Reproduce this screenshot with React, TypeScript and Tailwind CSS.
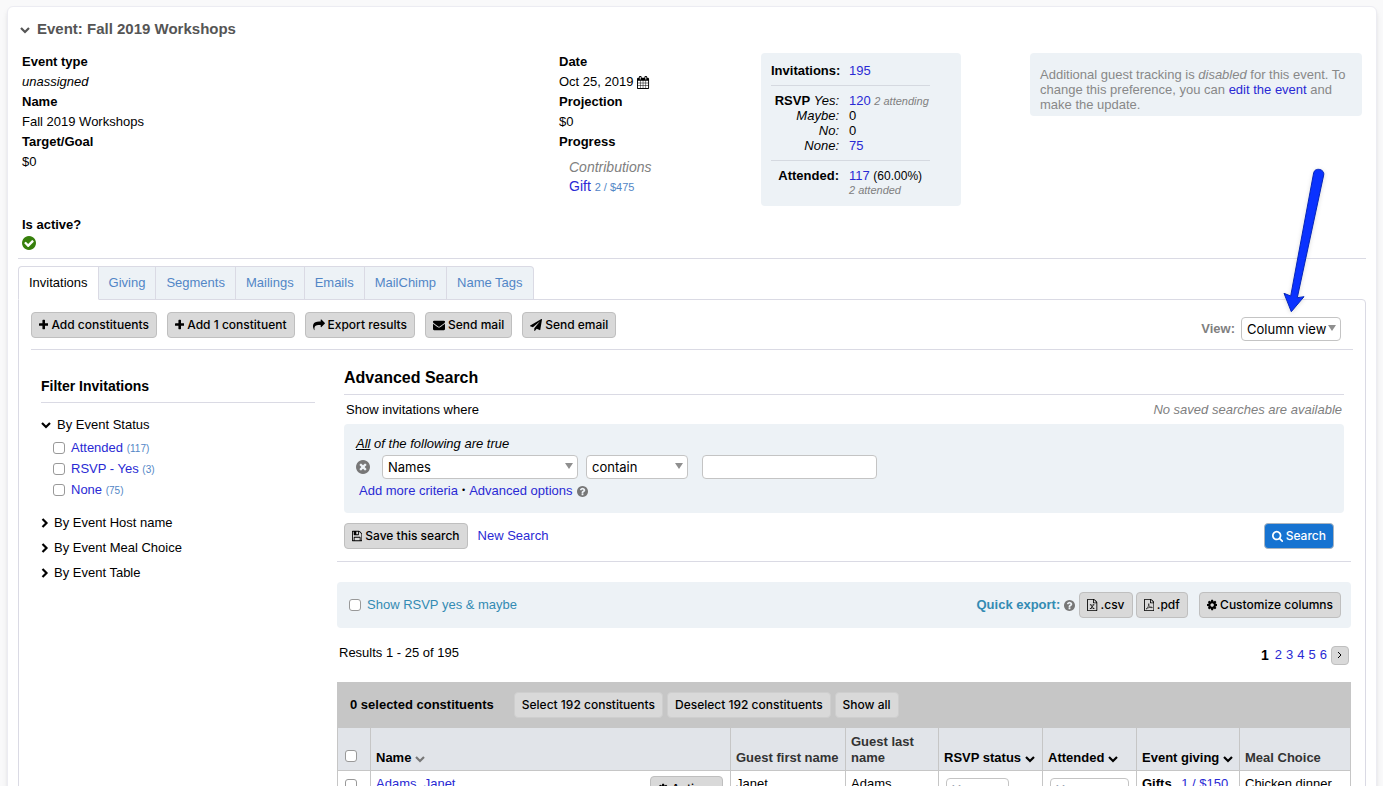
import React from 'react'

const circle = 'M1664 896q0 209-103 385.5t-279.5 279.5-385.5 103-385.5-103-279.5-279.5-103-385.5 103-385.5 279.5-279.5 385.5-103 385.5 103 279.5 279.5 103 385.5z'

// each icon has its own box, so that narrow glyphs take less room in a line
const icons = {
  plus: { box: '192 0 1408 1792', d: 'M1600 736v192q0 40-28 68t-68 28h-416v416q0 40-28 68t-68 28h-192q-40 0-68-28t-28-68v-416h-416q-40 0-68-28t-28-68v-192q0-40 28-68t68-28h416v-416q0-40 28-68t68-28h192q40 0 68 28t28 68v416h416q40 0 68 28t28 68z' },
  share: { box: '0 0 1792 1792', d: 'M1792 640q0 26-19 45l-512 512q-19 19-45 19t-45-19-19-45v-256h-224q-98 0-175.5 6t-154 21.5-133 42.5-105.5 69.5-80 101-48.5 138.5-17.5 181q0 55 5 123 0 6 2.5 23.5t2.5 26.5q0 15-8.5 25t-23.5 10q-16 0-28-17-7-9-13-22t-13.5-30-10.5-24q-127-285-127-451 0-199 53-333 162-403 875-403h224v-256q0-26 19-45t45-19 45 19l512 512q19 19 19 45z' },
  envelope: { box: '0 0 1792 1792', d: 'M1792 710v794q0 66-47 113t-113 47h-1472q-66 0-113-47t-47-113v-794q44 49 101 87 362 246 497 345 57 42 92.5 65.5t94.5 48 110 24.5h2q51 0 110-24.5t94.5-48 92.5-65.5q170-123 498-345 57-39 100-87zm0-294q0 79-49 151t-122 123q-376 261-468 325-10 7-42.5 31t-54 38.5-52 32.5-57.5 27-50 9h-2q-23 0-50-9t-57.5-27-52-32.5-54-38.5-42.5-31q-91-64-262-182.5t-205-142.5q-62-42-117-115.5t-55-136.5q0-78 41.5-130t118.5-52h1472q65 0 112.5 47t47.5 113z' },
  plane: { box: '0 0 1792 1792', d: 'M1764 11q33 24 27 64l-256 1536q-5 29-32 45-14 8-31 8-11 0-24-5l-453-185-242 295q-18 23-49 23-13 0-22-4-19-7-30.5-23.5t-11.5-36.5v-349l864-1059-1069 925-395-162q-37-14-40-55-2-40 32-59l1664-960q15-9 32-9 20 0 36 11z' },
  save: { box: '128 0 1536 1792', d: 'M512 1536h768v-384h-768v384zm896 0h128v-896q0-14-10-38.5t-20-34.5l-281-281q-10-10-34-20t-39-10v416q0 40-28 68t-68 28h-576q-40 0-68-28t-28-68v-416h-128v1280h128v-416q0-40 28-68t68-28h832q40 0 68 28t28 68v416zm-384-928v-320q0-13-9.5-22.5t-22.5-9.5h-192q-13 0-22.5 9.5t-9.5 22.5v320q0 13 9.5 22.5t22.5 9.5h192q13 0 22.5-9.5t9.5-22.5zm640 32v928q0 40-28 68t-68 28h-1344q-40 0-68-28t-28-68v-1344q0-40 28-68t68-28h928q40 0 88 20t76 48l280 280q28 28 48 76t20 88z' },
  search: { box: '64 0 1664 1792', d: 'M1216 832q0-185-131.5-316.5t-316.5-131.5-316.5 131.5-131.5 316.5 131.5 316.5 316.5 131.5 316.5-131.5 131.5-316.5zm512 832q0 52-38 90t-90 38q-54 0-90-38l-343-342q-179 124-399 124-143 0-273.5-55.5t-225-150-150-225-55.5-273.5 55.5-273.5 150-225 225-150 273.5-55.5 273.5 55.5 225 150 150 225 55.5 273.5q0 220-124 399l343 343q37 37 37 90z' },
  cog: { box: '128 0 1536 1792', d: 'M1152 896q0-106-75-181t-181-75-181 75-75 181 75 181 181 75 181-75 75-181zm512-109v222q0 12-8 23t-20 13l-185 28q-19 54-39 91 35 50 107 138 10 12 10 25t-9 23q-27 37-99 108t-94 71q-12 0-26-9l-138-108q-44 23-91 38-16 136-29 186-7 28-36 28h-222q-14 0-24.5-8.5t-11.5-21.5l-28-184q-49-16-90-37l-141 107q-10 9-25 9-14 0-25-11-126-114-165-168-7-10-7-23 0-12 8-23 15-21 51-66.5t54-70.5q-27-50-41-99l-183-27q-13-2-21-12.5t-8-23.5v-222q0-12 8-23t19-13l186-28q14-46 39-92-40-57-107-138-10-12-10-24 0-10 9-23 26-36 98.5-107.5t94.5-71.5q13 0 26 10l138 107q44-23 91-38 16-136 29-186 7-28 36-28h222q14 0 24.5 8.5t11.5 21.5l28 184q49 16 90 37l142-107q9-9 24-9 13 0 25 10 129 119 165 170 7 8 7 22 0 12-8 23-15 21-51 66.5t-54 70.5q26 50 41 98l183 28q13 2 21 12.5t8 23.5z' },
  calendar: { box: '64 0 1664 1792', d: 'M192 1664h288v-288h-288v288zm352 0h320v-288h-320v288zm-352-352h288v-320h-288v320zm352 0h320v-320h-320v320zm-352-384h288v-288h-288v288zm736 736h320v-288h-320v288zm-384-736h320v-288h-320v288zm768 736h288v-288h-288v288zm-384-352h320v-320h-320v320zm-352-864v-288q0-13-9.5-22.5t-22.5-9.5h-64q-13 0-22.5 9.5t-9.5 22.5v288q0 13 9.5 22.5t22.5 9.5h64q13 0 22.5-9.5t9.5-22.5zm736 864h288v-320h-288v320zm-384-384h320v-288h-320v288zm384 0h288v-288h-288v288zm32-480v-288q0-13-9.5-22.5t-22.5-9.5h-64q-13 0-22.5 9.5t-9.5 22.5v288q0 13 9.5 22.5t22.5 9.5h64q13 0 22.5-9.5t9.5-22.5zm384-64v1280q0 52-38 90t-90 38h-1408q-52 0-90-38t-38-90v-1280q0-52 38-90t90-38h128v-96q0-66 47-113t113-47h64q66 0 113 47t47 113v96h384v-96q0-66 47-113t113-47h64q66 0 113 47t47 113v96h128q52 0 90 38t38 90z' },
  check: { box: '128 128 1536 1536', d: 'M1412 734q0-28-18-46l-91-90q-19-19-45-19t-45 19l-408 407-226-226q-19-19-45-19t-45 19l-91 90q-18 18-18 46 0 27 18 45l362 362q19 19 45 19 27 0 46-19l543-543q18-18 18-45z' + circle },
  times: { box: '128 128 1536 1536', d: 'M1277 1122q0-26-19-45l-181-181 181-181q19-19 19-45 0-27-19-46l-90-90q-19-19-46-19-26 0-45 19l-181 181-181-181q-19-19-45-19-27 0-46 19l-90 90q-19 19-19 46 0 26 19 45l181 181-181 181q-19 19-19 45 0 27 19 46l90 90q19 19 46 19 26 0 45-19l181-181 181 181q19 19 45 19 27 0 46-19l90-90q19-19 19-46z' + circle },
  question: { box: '128 128 1536 1536', d: 'M1024 1376v-192q0-14-9-23t-23-9h-192q-14 0-23 9t-9 23v192q0 14 9 23t23 9h192q14 0 23-9t9-23zm256-672q0-88-55.5-163t-138.5-116-170-41q-243 0-371 213-15 24 8 42l132 100q7 6 19 6 16 0 25-12 53-68 86-92 34-24 86-24 48 0 85.5 26t37.5 59q0 38-20 61t-68 45q-63 28-115.5 86.5t-52.5 125.5v36q0 14 9 23t23 9h192q14 0 23-9t9-23q0-19 21.5-49.5t54.5-49.5q32-18 49-28.5t46-35 44.5-48 28-60.5 12.5-81z' + circle },
  file: { box: '128 0 1536 1792', d: 'M1596 380q28 28 48 76t20 88v1152q0 40-28 68t-68 28h-1344q-40 0-68-28t-28-68v-1600q0-40 28-68t68-28h896q40 0 88 20t76 48zm-444-244v376h376q-10-29-22-41l-313-313q-12-12-41-22zm384 1528v-1024h-416q-40 0-68-28t-28-68v-416h-768v1536h1280z' },
}

const tabs = ['Giving', 'Segments', 'Mailings', 'Emails', 'MailChimp', 'Name Tags']

const actions: { icon: keyof typeof icons; label: string }[] = [
  { icon: 'plus', label: 'Add constituents' },
  { icon: 'plus', label: 'Add 1 constituent' },
  { icon: 'share', label: 'Export results' },
  { icon: 'envelope', label: 'Send mail' },
  { icon: 'plane', label: 'Send email' },
]

const statuses = [
  { label: 'Attended', count: 117 },
  { label: 'RSVP - Yes', count: 3 },
  { label: 'None', count: 75 },
]

const link = 'text-[#2a2ad4] hover:underline'
const th = 'border border-[#c6c6c6] px-[5px] pb-1 align-bottom font-bold'
const td = 'border border-[#c6c6c6] px-[5px] align-top'

const buttonColors = {
  gray: 'border-[#bfbfbf] bg-[#d9d9d9] text-black',
  flat: 'border-[#cecece] bg-[#d9d9d9] text-black',
  blue: 'border-[#a9b4bf] bg-[#1673d1] text-white',
}

const Icon = ({ name, className = 'h-3', children }: { name: keyof typeof icons; className?: string; children?: React.ReactNode }) => (
  <svg viewBox={icons[name].box} fill="currentColor" fillRule="evenodd" aria-hidden="true" className={`w-auto shrink-0 ${className}`}>
    <path d={icons[name].d} />
    {children}
  </svg>
)

const Chevron = ({ className = '' }: { className?: string }) => (
  <svg viewBox="0 0 10 10" fill="none" stroke="currentColor" strokeWidth="2.2" aria-hidden="true" className={`inline-block size-[10px] shrink-0 ${className}`}>
    <path d="M1 3l4 4 4-4" />
  </svg>
)

const ChevronRight = () => (
  <svg viewBox="0 0 8 10" fill="none" stroke="currentColor" strokeWidth="2.2" aria-hidden="true" className="h-[10px] w-2 shrink-0">
    <path d="M1.5 1l4 4-4 4" />
  </svg>
)

const Button = ({ children, color = 'gray', className = '' }: { children: React.ReactNode; color?: keyof typeof buttonColors; className?: string }) => (
  <button type="button" className={`inline-flex h-[26px] shrink-0 items-center gap-[3px] rounded border px-[7px] font-[Inter] text-xs font-medium whitespace-nowrap ${buttonColors[color]} ${className}`}>
    {children}
  </button>
)

const Select = ({ id, label, options, className = '' }: { id: string; label: string; options: string[]; className?: string }) => (
  <span className={`relative block ${className}`}>
    <select id={id} aria-label={label} className="block h-6 w-full appearance-none rounded border border-[#c4c4c4] bg-white pt-px pl-[5px] font-[Inter] text-[13px]">
      {options.map((o) => <option key={o}>{o}</option>)}
    </select>
    <svg viewBox="0 0 8 6" aria-hidden="true" className="pointer-events-none absolute top-2 right-[5px] h-[6px] w-2 fill-[#8f8f8f]">
      <path d="M0 0h8L4 6z" />
    </svg>
  </span>
)

const Checkbox = ({ id, label, className = '' }: { id: string; label?: string; className?: string }) => (
  <input id={id} type="checkbox" aria-label={label} className={`size-3 shrink-0 appearance-none rounded-[3px] border border-[#999] bg-white checked:bg-[#1673d1] ${className}`} />
)

const Arrow = () => (
  <svg viewBox="0 0 52 152" aria-hidden="true" className="pointer-events-none absolute right-3 bottom-full h-[152px] w-[52px] drop-shadow-sm">
    <path d="M36.7 7.7C38 2 48 4 46.7 10L20.3 132.7 27 131.7 14.3 146.7 7 128.3 13.7 131z" fill="#0a32ff" stroke="#0626b8" strokeWidth="1" strokeLinejoin="round" />
  </svg>
)

const Summary = () => (
  <div className="grid grid-cols-[537fr_202fr_269fr_332fr] px-1 leading-5">
    <dl>
      <dt className="font-bold">Event type</dt>
      <dd className="italic">unassigned</dd>
      <dt className="font-bold">Name</dt>
      <dd>Fall 2019 Workshops</dd>
      <dt className="font-bold">Target/Goal</dt>
      <dd>$0</dd>
      <dt className="mt-[43px] font-bold">Is active?</dt>
      <dd className="flex h-5 items-start pt-px">
        <Icon name="check" className="h-[14px] text-[#37800c]" />
      </dd>
    </dl>
    <dl>
      <dt className="font-bold">Date</dt>
      <dd className="flex items-center gap-1">Oct 25, 2019 <Icon name="calendar" className="h-[13px]" /></dd>
      <dt className="font-bold">Projection</dt>
      <dd>$0</dd>
      <dt className="font-bold">Progress</dt>
      <dd className="mt-[6px] pl-[10px] text-sm leading-[19px]">
        <p className="text-[#808080] italic">Contributions</p>
        <p><a href="#" className={link}>Gift</a> <span className="text-[11px] text-[#5286c6]">2 / $475</span></p>
      </dd>
    </dl>
    <div className="mt-px w-[200px] self-start rounded bg-[#edf2f6] pt-[10px] pr-[31px] pb-[9px] pl-[10px] leading-[15px]">
      <dl className="grid grid-cols-[68px_1fr] gap-x-[10px] whitespace-nowrap">
        <dt className="text-right font-bold">Invitations:</dt>
        <dd><a href="#" className={link}>195</a></dd>
        <hr className="col-span-2 my-[7px] border-[#d5d9e0]" />
        <dt className="text-right"><b>RSVP</b> <i>Yes:</i></dt>
        <dd className="h-[15px]"><a href="#" className={link}>120</a> <i className="text-[11px] text-[#808080]">2 attending</i></dd>
        <dt className="text-right italic">Maybe:</dt>
        <dd>0</dd>
        <dt className="text-right italic">No:</dt>
        <dd>0</dd>
        <dt className="text-right italic">None:</dt>
        <dd><a href="#" className={link}>75</a></dd>
        <hr className="col-span-2 my-[7px] border-[#d5d9e0]" />
        <dt className="text-right font-bold">Attended:</dt>
        <dd>
          <p className="h-[15px]"><a href="#" className={link}>117</a> <span className="text-xs">(60.00%)</span></p>
          <p className="text-[11px] leading-[14px] text-[#808080] italic">2 attended</p>
        </dd>
      </dl>
    </div>
    <p className="mt-px self-start rounded bg-[#edf2f6] px-[10px] pt-[14px] pb-1 leading-[15px] text-[#888]">
      Additional guest tracking is <i>disabled</i> for this event. To change this preference, you can <a href="#" className={link}>edit the event</a> and make the update.
    </p>
  </div>
)

const Sidebar = () => (
  <aside className="w-[274px] shrink-0 pt-[26px]">
    <h2 className="border-b border-[#dadae4] pb-[6px] text-sm leading-5 font-bold">Filter Invitations</h2>
    <button type="button" className="mt-3 flex h-5 items-center gap-[6px]"><Chevron />By Event Status</button>
    <ul className="mt-[2px] mb-[10px] pl-3">
      {statuses.map(({ label, count }) => (
        <li key={label} className="flex h-[21px] items-center gap-[6px]">
          <Checkbox id={label} />
          <label htmlFor={label} className="text-[#2a2ad4]">{label} <span className="text-[10px] text-[#5286c6]">({count})</span></label>
        </li>
      ))}
    </ul>
    {['By Event Host name', 'By Event Meal Choice', 'By Event Table'].map((label) => (
      <button key={label} type="button" className="flex h-[25px] items-center gap-[5px]"><ChevronRight />{label}</button>
    ))}
  </aside>
)

const Search = () => (
  <section className="border-b border-[#dadae4] px-[7px] pt-[18px] pb-3">
    <h2 className="border-b border-[#dadae4] pb-[6px] text-base leading-5 font-bold">Advanced Search</h2>
    <div className="flex h-[29px] items-center justify-between px-[2px]">
      <p>Show invitations where</p>
      <p className="text-[#808080] italic">No saved searches are available</p>
    </div>
    <div className="rounded bg-[#edf2f6] px-3 pt-[11px] pb-3">
      <p className="leading-[18px] italic"><a href="#" className="underline">All</a> of the following are true</p>
      <div className="mt-[2px] flex items-center">
        <button type="button" aria-label="Remove criteria" className="mr-3 flex"><Icon name="times" className="h-[14px] text-[#777]" /></button>
        <Select id="field" label="Field" options={['Names', 'Emails', 'Tags']} className="mr-2 w-[196px]" />
        <Select id="operator" label="Operator" options={['contain', 'do not contain']} className="mr-[14px] w-[102px]" />
        <input type="text" aria-label="Value" className="h-6 w-[175px] rounded border border-[#c4c4c4] bg-white px-1" />
      </div>
      <p className="mt-[2px] flex h-5 items-center gap-1 pl-[3px]">
        <a href="#" className={link}>Add more criteria</a>
        <span className="text-[9px]">•</span>
        <a href="#" className={link}>Advanced options</a>
        <Icon name="question" className="h-[11px] text-[#777]" />
      </p>
    </div>
    <div className="mt-[10px] flex items-center">
      <Button><Icon name="save" />Save this search</Button>
      <a href="#" className={`ml-[10px] ${link}`}>New Search</a>
      <Button color="blue" className="mr-[10px] ml-auto"><Icon name="search" />Search</Button>
    </div>
  </section>
)

const Results = () => (
  <>
    <div className="mt-5 flex h-[46px] items-center rounded bg-[#edf2f6] pr-[10px] pl-3">
      <Checkbox id="rsvp" />
      <label htmlFor="rsvp" className="ml-[6px] text-[#338bb3]">Show RSVP yes &amp; maybe</label>
      <span className="mr-1 ml-auto font-bold text-[#338bb3]">Quick export:</span>
      <Icon name="question" className="mr-1 h-[11px] text-[#777]" />
      <Button className="mr-[3px]">
        <Icon name="file"><path d="M560 860h240M960 860h260M690 860l420 560M1110 860l-420 560M560 1420h260M970 1420h260" fill="none" stroke="currentColor" strokeWidth="120" /></Icon>
        .csv
      </Button>
      <Button className="mr-[11px]">
        <Icon name="file"><path d="M450 1490c170-60 370-400 420-720 20-110-60-110-60 0 0 260 280 540 520 540 90 0 50-90-50-90-260 0-560 90-830 270" fill="none" stroke="currentColor" strokeWidth="90" /></Icon>
        .pdf
      </Button>
      <Button><Icon name="cog" />Customize columns</Button>
    </div>
    <div className="flex h-[54px] items-center justify-between px-[2px]">
      <p className="pb-1">Results 1 - 25 of 195</p>
      <nav className="flex items-center gap-1">
        <b className="mr-[2px] text-sm">1</b>
        {[2, 3, 4, 5, 6].map((n) => <a key={n} href="#" className={link}>{n}</a>)}
        <button type="button" aria-label="Next page" className="flex h-[19px] w-[18px] items-center justify-center rounded border border-[#bfbfbf] bg-[#d9d9d9]">
          <svg viewBox="0 0 6 8" fill="none" stroke="#000" className="h-2 w-[6px]" aria-hidden="true"><path d="M1 1l3 3-3 3" /></svg>
        </button>
      </nav>
    </div>
    <div className="flex h-[45px] items-center gap-1 bg-[#c6c6c6] pl-[13px]">
      <b className="mr-4">0 selected constituents</b>
      {['Select 192 constituents', 'Deselect 192 constituents', 'Show all'].map((label) => (
        <Button key={label} color="flat">{label}</Button>
      ))}
    </div>
    <table className="w-full table-fixed border-collapse">
      <colgroup>
        <col className="w-[33px]" />
        <col />
        <col className="w-[115px]" />
        <col className="w-[93px]" />
        <col className="w-[104px]" />
        <col className="w-[94px]" />
        <col className="w-[103px]" />
        <col className="w-[111px]" />
      </colgroup>
      <thead>
        <tr className="h-[43px] bg-[#e1e4e9] text-left leading-4 text-[#333]">
          <th className={th}><Checkbox id="all" label="Select all" className="mb-1 ml-[2px] block" /></th>
          <th className={`${th} text-black`}>Name <Chevron className="text-[#777]" /></th>
          <th className={`${th} whitespace-nowrap`}>Guest first name</th>
          <th className={th}>Guest last name</th>
          <th className={`${th} whitespace-nowrap text-black`}>RSVP status <Chevron /></th>
          <th className={`${th} whitespace-nowrap text-black`}>Attended <Chevron /></th>
          <th className={`${th} whitespace-nowrap text-black`}>Event giving <Chevron /></th>
          <th className={th}>Meal Choice</th>
        </tr>
      </thead>
      <tbody>
        <tr className="h-[43px]">
          <td className={`${td} pt-2`}><Checkbox id="row" label="Select Adams, Janet" className="ml-[2px] block" /></td>
          <td className={`${td} pt-[3px]`}>
            <div className="flex items-start justify-between pr-[2px]">
              <a href="#" className={link}>Adams, Janet</a>
              <Button className="mt-[2px]"><Icon name="cog" />Actions</Button>
            </div>
          </td>
          <td className={`${td} pt-[3px]`}>Janet</td>
          <td className={`${td} pt-[3px]`}>Adams</td>
          <td className={`${td} pt-[7px] text-gray-400`}><Select id="rsvp-status" label="RSVP status" options={['Yes', 'No', 'Maybe']} className="ml-[2px] w-[63px]" /></td>
          <td className={`${td} pt-[7px] text-gray-400`}><Select id="attended" label="Attended" options={['Yes', 'No']} className="ml-[2px] w-[79px]" /></td>
          <td className={`${td} pt-[3px] whitespace-nowrap`}><b>Gifts</b> <a href="#" className={`ml-[6px] ${link}`}>1 / $150</a></td>
          <td className={`${td} pt-[3px] whitespace-nowrap`}>Chicken dinner</td>
        </tr>
      </tbody>
    </table>
  </>
)

const App = () => {
  return (
    <div className="h-screen overflow-hidden bg-[#f9f9fa] pt-[6px] pr-[6px] pl-[7px] font-['Liberation_Sans',Arial,sans-serif] text-[13px] text-black">
      <main className="min-h-full rounded-md border border-[#ececf2] bg-white px-[10px] shadow-md">
        <h1 className="flex h-[45px] items-center gap-[7px] pl-[2px] text-[15px] font-bold text-[#555]"><Chevron />Event: Fall 2019 Workshops</h1>
        <Summary />
        <hr className="mt-[3px] border-[#dadae4]" />
        <div role="tablist" className="relative mt-[7px] -mb-px flex">
          <button type="button" role="tab" aria-selected="true" className="h-[34px] rounded-tl border border-[#dadae4] border-b-white bg-white px-[10px]">Invitations</button>
          {tabs.map((tab) => (
            <button key={tab} type="button" role="tab" className="h-[34px] border border-l-0 border-[#dadae4] bg-[#edf2f6] px-[10px] text-[#5286c6] last:rounded-tr">{tab}</button>
          ))}
        </div>
        <div className="rounded-tr border border-[#dadae4] px-3">
          <div className="flex items-start gap-[10px] border-b border-[#dadae4] pt-3 pr-3 pb-2">
            {actions.map(({ icon, label }) => <Button key={label}><Icon name={icon} />{label}</Button>)}
            <div className="relative mt-[5px] ml-auto flex items-center gap-[6px]">
              <label htmlFor="view" className="font-bold text-[#808080]">View:</label>
              <Select id="view" label="View" options={['Column view', 'List view']} className="w-[100px]" />
              <Arrow />
            </div>
          </div>
          <div className="flex gap-[22px] pr-[2px] pl-[10px]">
            <Sidebar />
            <div className="min-w-0 flex-1">
              <Search />
              <Results />
            </div>
          </div>
        </div>
      </main>
    </div>
  )
}

export default App
